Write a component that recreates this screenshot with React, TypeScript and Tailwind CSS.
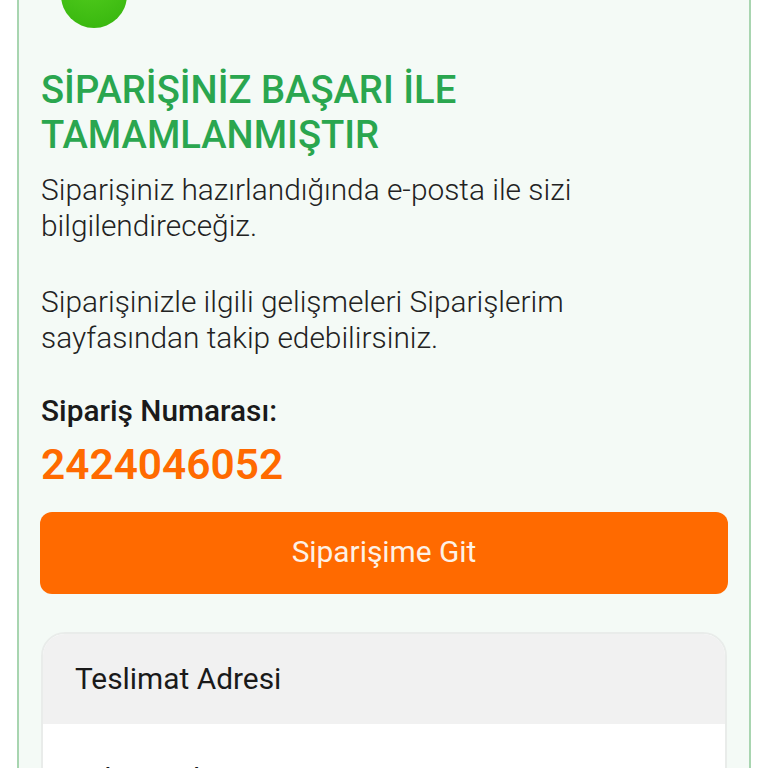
export default function App() {
  return (
    <div className="h-[768px] w-[768px] overflow-hidden bg-white font-['Roboto',sans-serif]">
      <div className="mx-[17px] h-[900px] border-x-2 border-[#a8d5b0] bg-[#f4faf6] px-[22px]">
        {/* Success icon, cut by the top of the window */}
        <div className="-mt-[38px] ml-[20px] h-[66px] w-[66px] rounded-full bg-[radial-gradient(circle_at_45%_20%,#56d020,#34b30c)]" />

        <h1 className="mt-[40px] text-[38.2px] leading-[45px] font-medium text-[#2aa64f]">
          SİPARİŞİNİZ BAŞARI İLE TAMAMLANMIŞTIR
        </h1>

        <p className="mt-[14px] text-[29.85px] leading-[36px] font-light text-[#222222]">
          Siparişiniz hazırlandığında e-posta ile sizi bilgilendireceğiz.
        </p>
        <p className="mt-[40px] text-[29.85px] leading-[36px] font-light text-[#222222]">
          Siparişinizle ilgili gelişmeleri Siparişlerim sayfasından takip edebilirsiniz.
        </p>

        <p className="mt-[37px] text-[29.8px] leading-[36px] font-medium text-[#1a1a1a]">Sipariş Numarası:</p>
        <p className="mt-[10px] text-[42.4px] leading-[52px] font-semibold text-[#ff6a00]">2424046052</p>

        <button className="-mx-px mt-[21px] flex h-[82px] w-[688px] items-center justify-center rounded-[12px] bg-[#ff6a00] pb-[2px] text-[29.85px] text-[#fdf1e6]">
          Siparişime Git
        </button>

        <div className="mt-[38px] overflow-hidden rounded-t-[24px] border-2 border-[#e9ecea] bg-white">
          <div className="flex h-[90px] items-center bg-[#f1f1f1] px-[32px] text-[29.85px] text-[#1a1a1a]">
            Teslimat Adresi
          </div>
          <p className="px-[32px] pt-[37px] text-[29.85px] leading-[36px] text-[#1a1a1a]">Ad Soyad</p>
        </div>
      </div>
    </div>
  )
}
